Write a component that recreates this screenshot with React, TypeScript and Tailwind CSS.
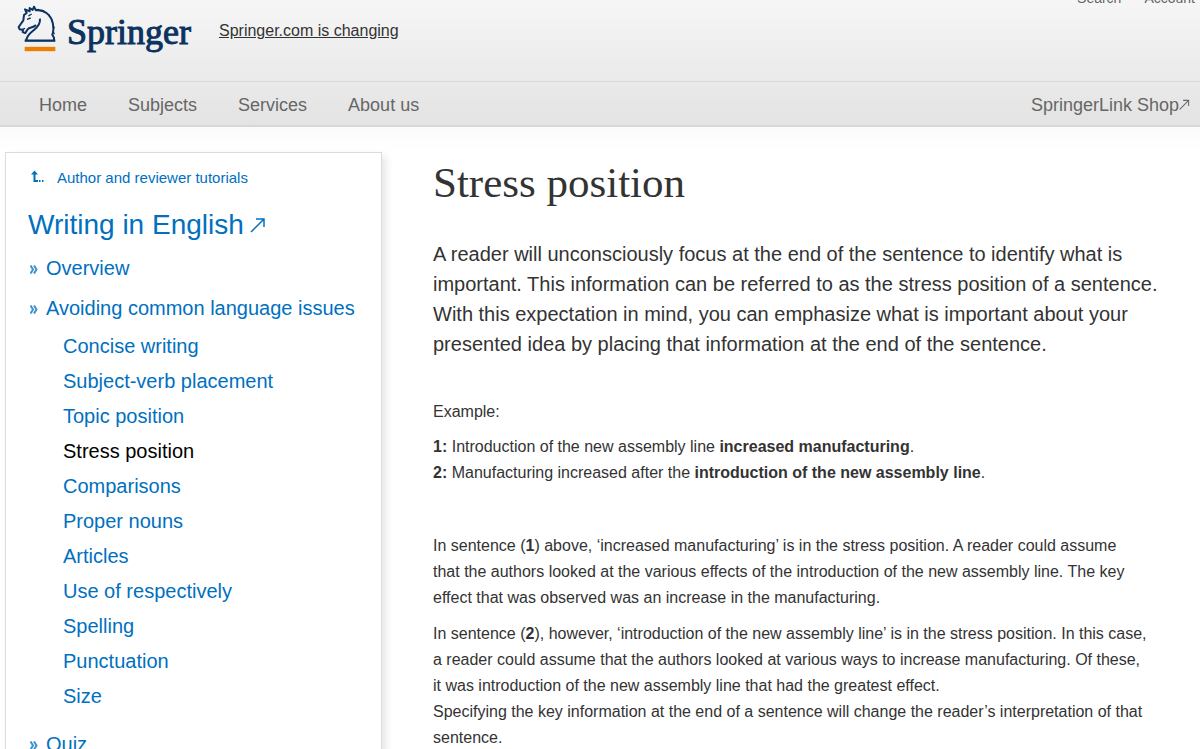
import React from 'react';

const navLinks = ['Home', 'Subjects', 'Services', 'About us'];

const issues = [
  'Concise writing',
  'Subject-verb placement',
  'Topic position',
  'Stress position',
  'Comparisons',
  'Proper nouns',
  'Articles',
  'Use of respectively',
  'Spelling',
  'Punctuation',
  'Size',
];

function Logo() {
  return (
    <a href="#" className="flex items-start text-[#0b3260]">
      <svg width="40" height="47" viewBox="50 14 120 141" fill="none" stroke="currentColor" strokeWidth="6" strokeLinejoin="round" aria-hidden="true">
        <path d="M73 121H165" strokeWidth="7" />
        <path d="M78 120C79 106 90 98 101 89C114 79 120 70 119 55" />
        <path d="M107 74C98 84 86 79 81 88L75 98L67 95L68 89L58 87L55 80L69 60L71 44L79 38L74 27L88 33L88 23L97 29L101 19L107 30C130 26 151 43 157 67C161 84 159 95 156 103L161 112L161 120" />
        <path d="M80 57L91 53M84 47L94 41M66 87L74 84" strokeWidth="4" />
        <path d="M108 29L116 27M128 30L134 37M145 42L149 51M154 57L157 66M158 76L162 84M158 92L162 102" strokeWidth="4" />
        <path d="M73 146H165" stroke="#ee7f00" strokeWidth="13" strokeLinejoin="miter" />
      </svg>
      <span className="ml-[10px] mt-2 font-['Liberation_Serif',serif] text-4xl leading-[38px] [-webkit-text-stroke:1px_#0b3260]">Springer</span>
    </a>
  );
}

function ArrowUpRight({ className }: { className: string }) {
  return (
    <svg className={className} viewBox="0 0 16 16" fill="none" stroke="currentColor" strokeWidth="1.5" aria-hidden="true">
      <path d="M1 15L14 2M6 2H14V10" />
    </svg>
  );
}

function Chevrons() {
  return (
    <svg className="ml-[2px] mr-2 mt-[2px]" width="8" height="9" viewBox="0 0 8 9" fill="none" stroke="#3a92cf" strokeWidth="2" aria-hidden="true">
      <path d="M0.500 0.500L3 4.500L0.500 8.500M4 0.500L6.500 4.500L4 8.500" />
    </svg>
  );
}

function Sidebar() {
  return (
    <aside className="w-[377px] shrink-0 border border-[#dcdcdc] bg-white pl-[22px] shadow-[4px_4px_8px_rgba(0,0,0,0.1)] text-[#0070bf]">
      <a href="#" className="mt-[11px] flex h-7 items-center text-[15px]">
        <svg className="ml-[3px] mr-[13px] mb-1" width="13" height="13" viewBox="0 0 13 13" fill="none" stroke="currentColor" strokeWidth="2" aria-hidden="true">
          <path d="M3.500 2V11H7M8 11H9.500M11 11H12.500" />
          <path d="M0 4.500L3.500 0.500L7 4.500Z" fill="currentColor" stroke="none" />
        </svg>
        Author and reviewer tutorials
      </a>
      <h2 className="mt-[14px] text-[28px] leading-[38px]">
        <a href="#" className="flex items-center">
          Writing in English
          <ArrowUpRight className="ml-[6px] size-4" />
        </a>
      </h2>
      <ul className="mt-1 text-xl">
        <li>
          <a href="#" className="flex h-10 items-center"><Chevrons />Overview</a>
        </li>
        <li>
          <a href="#" className="flex h-10 items-center"><Chevrons />Avoiding common language issues</a>
          <ul className="pl-[35px]">
            {issues.map(issue => (
              <li key={issue}>
                <a href="#" className={issue === 'Stress position' ? 'flex h-[35px] items-center text-black' : 'flex h-[35px] items-center'}>{issue}</a>
              </li>
            ))}
          </ul>
        </li>
        <li className="mt-[11px]">
          <a href="#" className="flex h-10 items-center"><Chevrons />Quiz</a>
        </li>
      </ul>
    </aside>
  );
}

export default function App() {
  return (
    <div className="h-screen overflow-hidden bg-white font-['Liberation_Sans',Arial,sans-serif] text-[#333333]">
      <header className="border-b-2 border-[#d8d8d8] bg-linear-to-b from-[#f6f6f6] to-[#e3e3e3]">
        <div className="flex h-[81px] items-start pl-[17px] pr-[5px]">
          <div className="mt-[5px]"><Logo /></div>
          <a href="#" className="ml-7 mt-5 text-base leading-[22px] underline">Springer.com is changing</a>
          <nav className="-mt-3 ml-auto flex gap-[23px] text-sm text-[#666666]">
            <a href="#">Search</a>
            <a href="#">Account</a>
          </nav>
        </div>
        <nav className="flex h-11 items-center border-t border-[#d8d8d8] pl-[39px] pr-[10px] pt-[2px] text-lg text-[#666666]">
          <div className="flex gap-[41px]">
            {navLinks.map(link => (
              <a key={link} href="#">{link}</a>
            ))}
          </div>
          <a href="#" className="ml-auto flex items-center">
            SpringerLink Shop
            <ArrowUpRight className="size-[11px]" />
          </a>
        </nav>
      </header>
      <div className="flex items-start gap-[51px] bg-linear-to-b from-[#fafafa] to-white to-[24px] pl-[5px] pr-8 pt-[25px]">
        <Sidebar />
        <main className="min-w-0 flex-1 text-base leading-[26px]">
          <h1 className="mt-[7px] font-['Liberation_Serif',serif] text-[43px] leading-[48px]">Stress position</h1>
          <p className="mt-8 text-xl leading-[30px]">
            A reader will unconsciously focus at the end of the sentence to identify what is important. This information can be referred to as the stress position of a sentence. With this expectation in mind, you can emphasize what is important about your presented idea by placing that information at the end of the sentence.
          </p>
          <p className="mt-10">Example:</p>
          <p className="mt-[9px]">
            <strong>1:</strong> Introduction of the new assembly line <strong>increased manufacturing</strong>.<br />
            <strong>2:</strong> Manufacturing increased after the <strong>introduction of the new assembly line</strong>.
          </p>
          <p className="mt-[47px]">
            In sentence (<strong>1</strong>) above, ‘increased manufacturing’ is in the stress position. A reader could assume<br />
            that the authors looked at the various effects of the introduction of the new assembly line. The key<br />
            effect that was observed was an increase in the manufacturing.
          </p>
          <p className="mt-[10px]">
            In sentence (<strong>2</strong>), however, ‘introduction of the new assembly line’ is in the stress position. In this case,<br />
            a reader could assume that the authors looked at various ways to increase manufacturing. Of these,<br />
            it was introduction of the new assembly line that had the greatest effect.<br />
            Specifying the key information at the end of a sentence will change the reader’s interpretation of that sentence.
          </p>
        </main>
      </div>
    </div>
  );
}
